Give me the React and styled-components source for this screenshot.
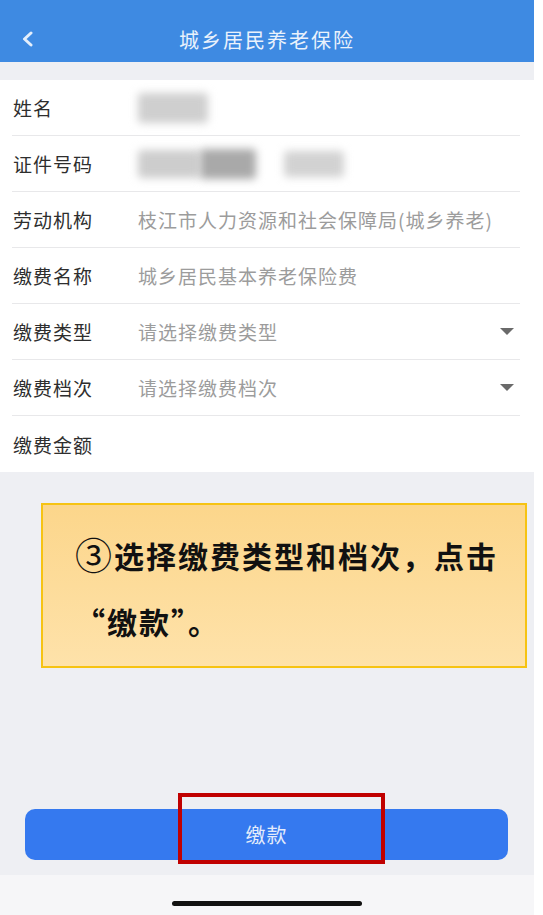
import React from "react";
import styled, { createGlobalStyle } from "styled-components";

const GlobalStyle = createGlobalStyle`
  body {
    margin: 0;
    background: #ffffff;
    font-family: "Noto Sans CJK SC", "Noto Sans", sans-serif;
  }
`;

const Screen = styled.div`
  width: 534px;
  height: 915px;
  display: flex;
  flex-direction: column;
  background: #eeeff3;
`;

const Header = styled.div`
  height: 62px;
  box-sizing: border-box;
  padding-top: 16px;
  flex-shrink: 0;
  display: grid;
  grid-template-columns: 60px 1fr 60px;
  align-items: center;
  background: #3e8ae2;
`;

const Back = styled.div`
  display: flex;
  align-items: center;
  padding-left: 21px;
`;

const Title = styled.div`
  text-align: center;
  color: #eaf2fc;
  font-size: 20px;
  letter-spacing: 2px;
`;

const List = styled.div`
  margin-top: 18px;
  background: #ffffff;
  flex-shrink: 0;
`;

const Row = styled.div`
  height: 56px;
  box-sizing: border-box;
  display: flex;
  align-items: center;
  margin: 0 14px 0 12px;
  border-bottom: ${(p) => (p.last ? "none" : "1px solid #e8e8ea")};
`;

const Label = styled.div`
  width: 125px;
  flex-shrink: 0;
  padding-left: 1px;
  color: #2e2e2e;
  font-size: 19px;
  letter-spacing: 1px;
`;

const Value = styled.div`
  flex: 1;
  display: flex;
  align-items: center;
  color: #9c9c9c;
  font-size: 19px;
  letter-spacing: 1px;
  white-space: nowrap;
`;

const Smudge = styled.div`
  width: ${(p) => p.w}px;
  height: ${(p) => p.h}px;
  margin-left: ${(p) => p.gap || 0}px;
  background: ${(p) => p.tone};
  border-radius: 4px;
  filter: blur(4px);
`;

const Caret = styled.svg`
  margin-right: 6px;
  flex-shrink: 0;
`;

const Body = styled.div`
  flex: 1;
  display: flex;
  flex-direction: column;
  padding: 31px 0 15px;
`;

const Callout = styled.div`
  margin-left: 41px;
  width: 486px;
  height: 165px;
  box-sizing: border-box;
  border: 2px solid #f6c313;
  background: linear-gradient(180deg, #fcd68b 0%, #fee2aa 100%);
  padding: 16px 0 0 32px;
  color: #111111;
  font-size: 30px;
  font-weight: 700;
  line-height: 66px;
  letter-spacing: 2px;
  white-space: nowrap;
`;

const Circled = styled.span`
  font-size: 37px;
  font-weight: 400;
  vertical-align: -2px;
`;

const Spacer = styled.div`
  flex: 1;
`;

const ButtonWrap = styled.div`
  position: relative;
  margin: 0 26px 0 25px;
`;

const PayButton = styled.div`
  height: 51px;
  border-radius: 10px;
  background: #3579ef;
  display: flex;
  align-items: center;
  justify-content: center;
  color: #e4ecfb;
  font-size: 20px;
  letter-spacing: 1px;
`;

const Highlight = styled.div`
  position: absolute;
  left: 153px;
  top: -16px;
  width: 207px;
  height: 71px;
  box-sizing: border-box;
  border: 4px solid #c00000;
`;

const HomeBar = styled.div`
  height: 40px;
  flex-shrink: 0;
  background: #f6f6f8;
  display: flex;
  align-items: flex-end;
  justify-content: center;
  padding-bottom: 9px;
  box-sizing: border-box;
`;

const Indicator = styled.div`
  width: 190px;
  height: 5px;
  border-radius: 3px;
  background: #111111;
`;

const DownCaret = () => (
  <Caret width="14" height="7" viewBox="0 0 14 7">
    <path d="M0 0 L14 0 L7 7 Z" fill="#6a6a6a" />
  </Caret>
);

const rows = [
  {
    label: "姓名",
    value: <Smudge w={70} h={30} tone="#cfcfcf" />,
  },
  {
    label: "证件号码",
    value: (
      <>
        <Smudge w={62} h={28} tone="#cdcdcd" />
        <Smudge w={56} h={30} tone="#a9a9a9" />
        <Smudge w={60} h={26} tone="#d2d2d2" gap={28} />
      </>
    ),
  },
  { label: "劳动机构", value: "枝江市人力资源和社会保障局(城乡养老)" },
  { label: "缴费名称", value: "城乡居民基本养老保险费" },
  { label: "缴费类型", value: "请选择缴费类型", select: true },
  { label: "缴费档次", value: "请选择缴费档次", select: true },
  { label: "缴费金额", value: "" },
];

export default function App() {
  return (
    <>
      <GlobalStyle />
      <Screen>
        <Header>
          <Back>
            <svg width="14" height="16" viewBox="0 0 14 16">
              <path
                d="M10 2 L3.5 8 L10 14"
                fill="none"
                stroke="#e3eefb"
                strokeWidth="3"
                strokeLinecap="round"
                strokeLinejoin="round"
              />
            </svg>
          </Back>
          <Title>城乡居民养老保险</Title>
          <div />
        </Header>

        <List>
          {rows.map((row, i) => (
            <Row key={row.label} last={i === rows.length - 1}>
              <Label>{row.label}</Label>
              <Value>{row.value}</Value>
              {row.select && <DownCaret />}
            </Row>
          ))}
        </List>

        <Body>
          <Callout>
            <Circled>③</Circled>选择缴费类型和档次，点击
            <br />
            “缴款”。
          </Callout>
          <Spacer />
          <ButtonWrap>
            <PayButton>缴款</PayButton>
            <Highlight />
          </ButtonWrap>
        </Body>

        <HomeBar>
          <Indicator />
        </HomeBar>
      </Screen>
    </>
  );
}
